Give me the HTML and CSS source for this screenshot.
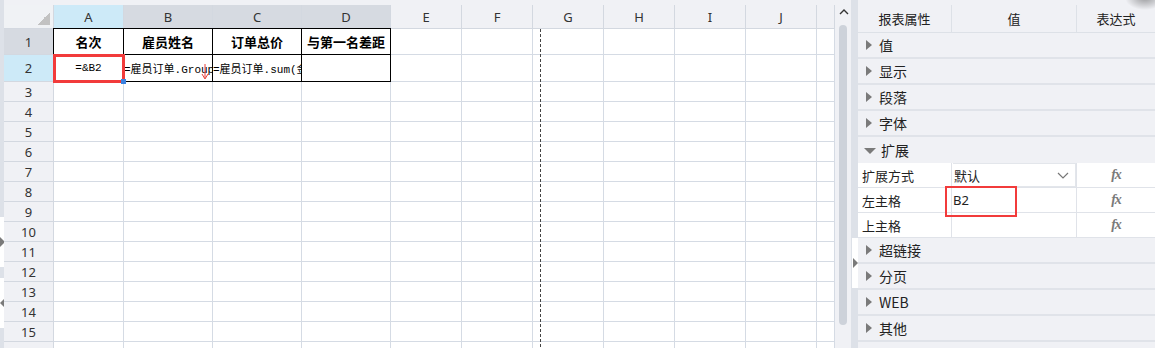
FILE: index.html
```html
<!DOCTYPE html>
<html lang="zh">
<head>
  <meta charset="UTF-8">
  <title>报表设计</title>
  <link rel="stylesheet" href="styles.css">
</head>
<body>
  <div class="app">
    <!-- left splitter -->
    <div class="edge">
      <div class="edge-fill top"></div>
      <div class="edge-btn"><span class="tri tri-r"></span></div>
      <div class="edge-fill gap"></div>
      <div class="edge-btn"><span class="tri tri-l"></span></div>
      <div class="edge-fill"></div>
    </div>

    <!-- sheet -->
    <div class="sheet-wrap">
      <div class="sheet" id="sheet">
        <div class="hd corner"></div>
        <div class="hd col sel">A</div>
        <div class="hd col used">B</div>
        <div class="hd col used">C</div>
        <div class="hd col used">D</div>
        <div class="hd col">E</div>
        <div class="hd col">F</div>
        <div class="hd col">G</div>
        <div class="hd col">H</div>
        <div class="hd col">I</div>
        <div class="hd col">J</div>
        <div class="hd col"></div>

        <div class="hd row used">1</div>
        <div class="c b top first title">名次</div>
        <div class="c b top title">雇员姓名</div>
        <div class="c b top title">订单总价</div>
        <div class="c b top title">与第一名差距</div>
        <div class="c"></div>
        <div class="c"></div>
        <div class="c"></div>
        <div class="c"></div>
        <div class="c"></div>
        <div class="c"></div>
        <div class="c"></div>

        <div class="hd row sel">2</div>
        <div class="c b first formula center cur">=&amp;B2</div>
        <div class="c b formula">=雇员订单.Group
          <svg class="expand" width="8" height="16" viewBox="0 0 8 16"><path d="M4 0V14M1 10L4 15L7 10" fill="none" stroke="#e8403a" stroke-width="1"/></svg>
        </div>
        <div class="c b formula">=雇员订单.sum(金额)</div>
        <div class="c b"></div>
        <div class="c"></div>
        <div class="c"></div>
        <div class="c"></div>
        <div class="c"></div>
        <div class="c"></div>
        <div class="c"></div>
        <div class="c"></div>
      </div>
      <div class="page-break"></div>
    </div>

    <!-- scrollbar -->
    <div class="vscroll">
      <svg class="up" width="10" height="6" viewBox="0 0 10 6"><path d="M1 5L5 1L9 5" fill="none" stroke="#333" stroke-width="1.4"/></svg>
      <div class="thumb"></div>
    </div>

    <div class="split">
      <div class="split-btn"><span class="tri tri-r"></span></div>
    </div>

    <!-- property panel -->
    <div class="panel">
      <div class="ph">
        <div>报表属性</div>
        <div>值</div>
        <div>表达式</div>
      </div>
      <div class="sec"><span class="tri tri-r"></span>值</div>
      <div class="sec"><span class="tri tri-r"></span>显示</div>
      <div class="sec"><span class="tri tri-r"></span>段落</div>
      <div class="sec"><span class="tri tri-r"></span>字体</div>
      <div class="sec open"><span class="tri tri-d"></span>扩展</div>
      <div class="prop">
        <div class="lbl">扩展方式</div>
        <div class="val"><div class="select">默认<svg width="12" height="7" viewBox="0 0 12 7"><path d="M1 1L6 6L11 1" fill="none" stroke="#777" stroke-width="1.2"/></svg></div></div>
        <div class="fx">fx</div>
      </div>
      <div class="prop">
        <div class="lbl">左主格</div>
        <div class="val hl">B2</div>
        <div class="fx">fx</div>
      </div>
      <div class="prop">
        <div class="lbl">上主格</div>
        <div class="val"></div>
        <div class="fx">fx</div>
      </div>
      <div class="sec"><span class="tri tri-r"></span>超链接</div>
      <div class="sec"><span class="tri tri-r"></span>分页</div>
      <div class="sec"><span class="tri tri-r"></span>WEB</div>
      <div class="sec"><span class="tri tri-r"></span>其他</div>
      <div class="sec"></div>
    </div>
  </div>

  <script>
    // empty rows 3..16
    const sheet = document.getElementById('sheet');
    for (let r = 3; r <= 16; r++) {
      let html = `<div class="hd row">${r}</div>`;
      for (let c = 0; c < 11; c++) html += '<div class="c"></div>';
      sheet.insertAdjacentHTML('beforeend', html);
    }
  </script>
</body>
</html>
```

FILE: styles.css
```css
* {
  box-sizing: border-box;
}
body {
  margin: 0;
  font-family: "Noto Sans", "Noto Sans CJK SC", sans-serif;
  color: #333;
  background: #f0f1f5;
  overflow: hidden;
}
.app {
  display: flex;
  width: 1155px;
  height: 348px;
  overflow: hidden;
}

/* left splitter */
.edge {
  width: 4px;
  display: flex;
  flex-direction: column;
  flex-shrink: 0;
}
.edge-fill {
  background: #dde1e8;
  flex: 1;
}
.edge-fill.top {
  flex: 0 0 217px;
}
.edge-fill.gap {
  flex: 0 0 11px;
}
.edge-btn {
  flex: 0 0 50px;
  background: #fff;
  display: flex;
  align-items: center;
}
.tri {
  display: inline-block;
  width: 0;
  height: 0;
}
.tri-r {
  border-top: 5px solid transparent;
  border-bottom: 5px solid transparent;
  border-left: 6px solid #7a7a7a;
}
.tri-l {
  border-top: 5px solid transparent;
  border-bottom: 5px solid transparent;
  border-right: 5px solid #7a7a7a;
}
.tri-d {
  border-left: 6px solid transparent;
  border-right: 6px solid transparent;
  border-top: 6px solid #7a7a7a;
}
.edge .tri-r {
  border-left-width: 5px;
}

/* sheet */
.sheet-wrap {
  position: relative;
  width: 831px;
  padding-top: 5px;
  background: #f0f1f5;
  flex-shrink: 0;
}
.sheet {
  display: grid;
  grid-template-columns: 50px 70px 89px 89px 89px repeat(6, 71px) 1fr;
  grid-template-rows: 24px 26px 27px repeat(14, 20px);
  background: #fff;
}
.hd {
  background: #f0f1f5;
  border-right: 1px solid #d3d8e0;
  border-bottom: 1px solid #d3d8e0;
  display: flex;
  align-items: center;
  justify-content: center;
  font-size: 13px;
  color: #333;
}
.hd.used {
  background: #d6dae1;
}
.hd.sel {
  background: #cdeaf8;
}
.corner {
  background: #f0f2f5 linear-gradient(to bottom right, transparent 50%, #c2c2c2 50%) no-repeat right 3px bottom 3px / 13px 13px;
}
.c {
  position: relative;
  border-right: 1px solid #d5dbe4;
  border-bottom: 1px solid #d5dbe4;
  font-size: 12px;
  white-space: nowrap;
  overflow: hidden;
  display: flex;
  align-items: center;
}
.c.b {
  border-right-color: #000;
  border-bottom-color: #000;
}
.c.top {
  box-shadow: 0 -1px 0 #000;
}
.c.first {
  box-shadow: -1px 0 0 #000;
}
.c.top.first {
  box-shadow: 0 -1px 0 #000, -1px 0 0 #000, -1px -1px 0 #000;
}
.title {
  justify-content: center;
  font-weight: bold;
  font-size: 13px;
  color: #000;
}
.formula {
  font-family: "Liberation Mono", "Noto Sans CJK SC", monospace;
  font-size: 11px;
  color: #000;
}
.formula.center {
  justify-content: center;
}
.cur {
  overflow: visible;
  outline: 3px solid #f23b3b;
  outline-offset: -2px;
  z-index: 1;
}
.cur::after {
  content: "";
  position: absolute;
  right: -3px;
  bottom: -3px;
  width: 5px;
  height: 5px;
  background: #3b82e0;
}
.expand {
  position: absolute;
  right: 3px;
  top: 9px;
}
.page-break {
  position: absolute;
  left: 536px;
  top: 29px;
  bottom: 0;
  width: 1px;
  background: repeating-linear-gradient(to bottom, #444 0 3px, transparent 3px 5px);
}

/* scrollbar */
.vscroll {
  width: 16px;
  flex-shrink: 0;
  background: #f0f1f5;
  display: flex;
  flex-direction: column;
  align-items: center;
  padding-top: 9px;
}
.vscroll .up {
  margin-left: 1px;
  flex-shrink: 0;
}
.thumb {
  margin-top: 10px;
  width: 8px;
  height: 300px;
  flex-shrink: 0;
  border-radius: 4px;
  background: #cdd2da;
}
.split {
  width: 7px;
  flex-shrink: 0;
  background: #dde1e8;
  padding-top: 238px;
}
.split-btn {
  height: 50px;
  width: 6px;
  margin-left: 1px;
  background: #fff;
  display: flex;
  align-items: center;
}
.split .tri-r {
  border-left-width: 5px;
  margin-left: 1px;
}

/* property panel */
.panel {
  position: relative;
  flex: 1;
  padding-top: 5px;
  background: #f0f1f5;
  display: flex;
  flex-direction: column;
  font-family: "Noto Sans CJK SC", sans-serif;
}
.panel > * {
  flex-shrink: 0;
}
.panel::after {
  content: "";
  position: absolute;
  right: -10px;
  top: -14px;
  width: 40px;
  height: 24px;
  background: radial-gradient(closest-side, rgba(0, 0, 0, 0.35), transparent);
}
.ph {
  display: grid;
  grid-template-columns: 94px 125px 1fr;
  height: 28px;
  border-bottom: 1px solid #dde1e7;
  font-size: 13px;
  color: #222;
}
.ph div {
  display: flex;
  align-items: center;
  justify-content: center;
  border-right: 1px solid #dde1e7;
}
.ph div:last-child {
  border-right: none;
}
.sec {
  height: 26px;
  display: flex;
  align-items: center;
  gap: 7px;
  padding-left: 8px;
  border-bottom: 2px solid #e0e3e9;
  font-size: 14px;
  color: #222;
}
.sec.open {
  gap: 5px;
  padding-left: 6px;
  border-bottom: none;
}
.sec.open .tri-d {
  margin-top: 2px;
}
.prop {
  display: grid;
  grid-template-columns: 94px 125px 1fr;
  height: 25px;
  background: #fff;
  border-bottom: 1px solid #e0e3e9;
  font-size: 13px;
  color: #222;
}
.lbl {
  display: flex;
  align-items: center;
  padding-left: 4px;
  border-right: 1px solid #e0e3e9;
}
.val {
  position: relative;
  display: flex;
  align-items: center;
  padding-left: 1px;
  border-right: 1px solid #e0e3e9;
  font-family: "Noto Sans", "Noto Sans CJK SC", sans-serif;
}
.select {
  flex: 1;
  height: 100%;
  display: flex;
  align-items: center;
  justify-content: space-between;
  padding: 0 6px 0 1px;
  border: 1px solid #e3e6eb;
  border-left: none;
  font-family: "Noto Sans CJK SC", sans-serif;
}
.hl::after {
  content: "";
  position: absolute;
  left: -7px;
  top: -2px;
  width: 68px;
  height: 27px;
  border: 2px solid #f23b3b;
}
.fx {
  display: flex;
  align-items: center;
  justify-content: center;
  font-family: "Liberation Serif", serif;
  font-style: italic;
  font-weight: bold;
  font-size: 14px;
  color: #7a7a7a;
  letter-spacing: -1px;
}
```
